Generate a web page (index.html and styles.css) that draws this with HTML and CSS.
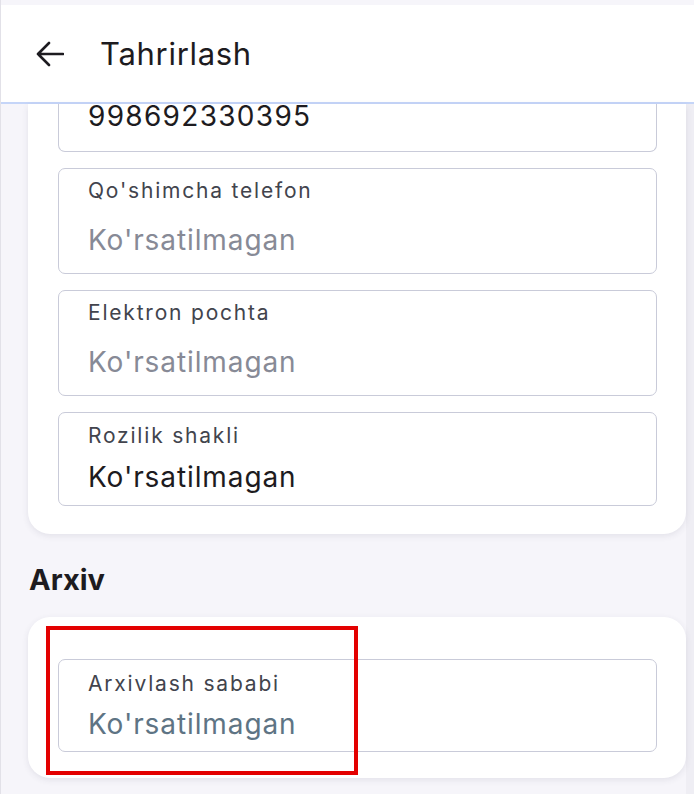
FILE: index.html
```html
<!DOCTYPE html>
<html lang="uz">
<head>
<meta charset="utf-8">
<title>Tahrirlash</title>
<link rel="stylesheet" href="styles.css">
</head>
<body>
<div class="screen">
  <header class="topbar">
    <button class="back" aria-label="Orqaga">
      <svg width="30" height="30" viewBox="0 0 30 30"><path d="M29 15H4M15 4L4 15l11 11" fill="none" stroke="#1d1b20" stroke-width="2.6" stroke-linecap="round" stroke-linejoin="round"/></svg>
    </button>
    <h1 class="title">Tahrirlash</h1>
  </header>
  <main class="scroll">
    <div class="content">
      <section class="card card-main">
        <div class="field field-first">
          <div class="value number">998692330395</div>
        </div>
        <div class="field field-empty">
          <div class="label">Qo'shimcha telefon</div>
          <div class="value placeholder">Ko'rsatilmagan</div>
        </div>
        <div class="field field-empty">
          <div class="label">Elektron pochta</div>
          <div class="value placeholder">Ko'rsatilmagan</div>
        </div>
        <div class="field field-filled">
          <div class="label">Rozilik shakli</div>
          <div class="value">Ko'rsatilmagan</div>
        </div>
      </section>
      <h2 class="section-title">Arxiv</h2>
      <section class="card card-archive">
        <div class="field field-archive">
          <div class="label">Arxivlash sababi</div>
          <div class="value muted">Ko'rsatilmagan</div>
        </div>
        <div class="highlight"></div>
      </section>
    </div>
  </main>
</div>
</body>
</html>
```
FILE: styles.css
```css
* { box-sizing: border-box; }
html, body { margin: 0; padding: 0; }
body {
  background: #f6f5fa;
  font-family: Inter, "Noto Sans", sans-serif;
  color: #1d1b20;
}
.screen {
  width: 694px;
  height: 794px;
  display: flex;
  flex-direction: column;
  border-left: 1px solid #e2e1e8;
}
.topbar {
  margin-top: 5px;
  height: 99px;
  flex: none;
  background: #fff;
  border-bottom: 2px solid #c5d5f8;
  display: flex;
  align-items: center;
  padding-left: 33px;
  gap: 36px;
}
.back {
  border: 0;
  background: none;
  padding: 0;
  width: 30px;
  height: 30px;
  display: flex;
}
.title {
  margin: 0;
  font-size: 31px;
  font-weight: 400;
  color: #1d1b20;
  letter-spacing: 0.7px;
}
.scroll {
  flex: 1;
  border-right: 8px solid #efeef4;
}
.content {
  padding: 0 0 0 27px;
  display: flex;
  flex-direction: column;
}
.card {
  position: relative;
  background: #fff;
  border-radius: 22px;
  box-shadow: 0 2px 6px rgba(60, 60, 90, 0.10);
  width: 658px;
  padding: 0 29px 28px 30px;
  display: flex;
  flex-direction: column;
  gap: 16px;
}
.card-main {
  padding-top: 0;
  border-radius: 0 0 22px 22px;
}
.field {
  border: 1px solid #c9cbd9;
  border-radius: 7px;
  padding: 0 29px;
  display: flex;
  flex-direction: column;
}
.label {
  font-size: 21px;
  line-height: 24px;
  color: #42444d;
  letter-spacing: 1.8px;
}
.value {
  font-size: 28px;
  line-height: 32px;
  color: #1d1b20;
  letter-spacing: 0.9px;
}
.number {
  line-height: 24px;
  letter-spacing: 1.3px;
}
.placeholder { color: #878a96; }
.muted { color: #5e7484; }
.field-first {
  border-top: 0;
  border-radius: 0 0 7px 7px;
  height: 48px;
  padding-bottom: 23px;
}
.field-empty { padding-top: 10px; padding-bottom: 17px; gap: 21px; }
.field-filled { padding-top: 11px; padding-bottom: 12px; gap: 13px; }
.field-archive { padding-top: 12px; padding-bottom: 11px; gap: 12px; }
.section-title {
  margin: 30px 0 21px 1px;
  font-size: 29px;
  line-height: 32px;
  font-weight: 700;
  color: #1d1b20;
}
.card-archive { padding-top: 42px; padding-bottom: 26px; }
.highlight {
  position: absolute;
  left: 18px;
  top: 9px;
  width: 312px;
  height: 149px;
  border: 4px solid #e30000;
}
```
